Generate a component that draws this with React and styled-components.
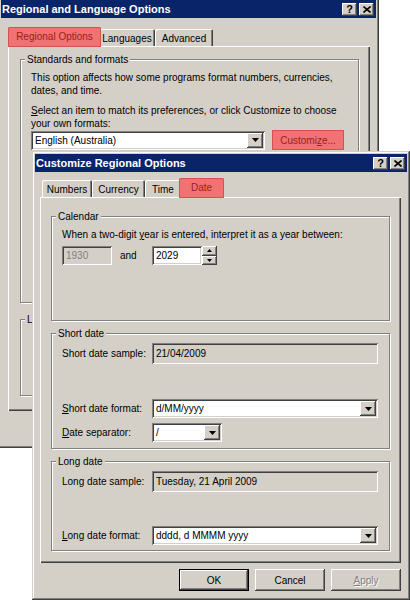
import styled, { createGlobalStyle, css } from "styled-components";

const FACE = "#d4d0c8";

const raised = css`
  box-shadow: inset -1px -1px #404040, inset 1px 1px #fff, inset -2px -2px #808080, inset 2px 2px ${FACE};
`;
const sunken = css`
  box-shadow: inset 1px 1px #808080, inset -1px -1px #fff, inset 2px 2px #404040, inset -2px -2px ${FACE};
`;
// red marker the screenshot author painted over a few controls
const marked = css`
  background: #f07272;
  color: #9e1c1c;
  box-shadow: inset 0 0 0 1px #d65050;
`;

const GlobalStyle = createGlobalStyle`
  html, body { margin: 0; padding: 0; background: #fff; }
  body {
    font-family: "Liberation Sans", Arial, sans-serif;
    font-size: 10px;
    color: #000;
  }
`;

const Desktop = styled.div`
  position: relative;
  width: 410px;
  height: 600px;
  overflow: hidden;
`;

const Window = styled.div`
  position: absolute;
  left: ${(p) => p.$x}px;
  top: ${(p) => p.$y}px;
  width: ${(p) => p.$w}px;
  height: ${(p) => p.$h}px;
  box-sizing: border-box;
  padding: 3px;
  display: flex;
  flex-direction: column;
  background: ${FACE};
  box-shadow: inset -1px -1px #404040, inset 1px 1px ${FACE}, inset -2px -2px #808080, inset 2px 2px #fff;
`;

const TitleBar = styled.div`
  height: 18px;
  flex: none;
  display: flex;
  align-items: center;
  padding: 0 2px 0 1px;
  background: #0a246a;
  color: #fff;
  font-size: 11px;
  font-weight: bold;
`;

const Title = styled.span`
  flex: 1;
  white-space: nowrap;
`;

const CaptionButton = styled.div`
  width: 15px;
  height: 13px;
  margin-left: 2px;
  box-sizing: border-box;
  display: flex;
  align-items: center;
  justify-content: center;
  background: ${FACE};
  color: #000;
  font-size: 11px;
  font-weight: bold;
  ${raised}
`;

const Body = styled.div`
  flex: 1;
  min-height: 0;
  display: flex;
  flex-direction: column;
  padding: ${(p) => p.$pad};
`;

const TabStrip = styled.div`
  height: 19px;
  flex: none;
  display: flex;
  align-items: flex-end;
  padding-left: 2px;
`;

const Tab = styled.div`
  width: ${(p) => p.$w}px;
  height: ${(p) => (p.$active ? 20 : 17)}px;
  box-sizing: border-box;
  padding-top: 2px;
  display: flex;
  align-items: center;
  justify-content: center;
  white-space: nowrap;
  background: ${FACE};
  border-radius: 2px 2px 0 0;
  box-shadow: inset 1px 1px #fff, inset -1px 0 #404040, inset -2px 0 #808080;
  ${(p) =>
    p.$active &&
    css`
      margin: 0 -2px -1px;
      position: relative;
      z-index: 1;
      padding: 0 0 1px;
    `}
  ${(p) => p.$marked && marked}
`;

const Panel = styled.div`
  flex: 1;
  min-height: 0;
  padding: ${(p) => p.$pad};
  box-shadow: inset 1px 1px #fff, inset -1px -1px #404040, inset -2px -2px #808080;
`;

const Group = styled.div`
  height: ${(p) => p.$h}px;
  margin-top: ${(p) => p.$mt || 0}px;
  box-sizing: border-box;
  padding: 0 10px;
  border: 1px solid #808080;
  box-shadow: inset 1px 1px #fff, 1px 1px #fff;
`;

const Legend = styled.div`
  width: fit-content;
  margin: -7px 0 0 -6px;
  padding: 0 2px;
  line-height: 13px;
  background: ${FACE};
`;

const Text = styled.p`
  margin: ${(p) => p.$mt || 0}px 0 0;
  line-height: 13px;
  white-space: nowrap;
`;

const Row = styled.div`
  height: ${(p) => p.$h || 20}px;
  margin-top: ${(p) => p.$mt || 0}px;
  display: flex;
  align-items: center;
  gap: ${(p) => p.$gap || 0}px;
`;

const Label = styled.span`
  width: 90px;
  flex: none;
  white-space: nowrap;
`;

const Conj = styled.span`
  width: 32px;
  padding-left: 8px;
`;

const Field = styled.div`
  width: ${(p) => p.$w}px;
  height: ${(p) => p.$h || 20}px;
  flex: none;
  box-sizing: border-box;
  padding: 2px;
  display: flex;
  align-items: center;
  background: ${(p) => (p.$readonly ? FACE : "#fff")};
  color: ${(p) => (p.$dim ? "#808080" : "#000")};
  ${sunken}
`;

const FieldText = styled.span`
  flex: 1;
  padding-left: 2px;
  white-space: nowrap;
  overflow: hidden;
`;

const DropButton = styled.div`
  width: 16px;
  height: 100%;
  box-sizing: border-box;
  display: flex;
  align-items: center;
  justify-content: center;
  background: ${FACE};
  ${raised}
`;

const Spinner = styled.div`
  width: 15px;
  height: 19px;
  display: flex;
  flex-direction: column;
`;

const SpinButton = styled.div`
  flex: 1;
  display: flex;
  align-items: center;
  justify-content: center;
  background: ${FACE};
  ${raised}
`;

const ButtonRow = styled.div`
  flex: none;
  display: flex;
  justify-content: flex-end;
  gap: 6px;
  margin-top: 6px;
`;

const Button = styled.div`
  width: ${(p) => p.$w || 70}px;
  height: ${(p) => p.$h || 22}px;
  flex: none;
  box-sizing: border-box;
  display: flex;
  align-items: center;
  justify-content: center;
  background: ${FACE};
  ${raised}
  ${(p) =>
    p.$default &&
    css`
      box-shadow: inset 0 0 0 1px #000, inset -2px -2px #404040, inset 2px 2px #fff, inset -3px -3px #808080;
    `}
  ${(p) =>
    p.$disabled &&
    css`
      color: #808080;
      text-shadow: 1px 1px #fff;
    `}
  ${(p) => p.$marked && marked}
`;

const CloseGlyph = () => (
  <svg width="8" height="7" viewBox="0 0 8 7">
    <path d="M0.5 0.5L7.5 6.5M7.5 0.5L0.5 6.5" stroke="#000" strokeWidth="1.6" />
  </svg>
);

const DownArrow = () => (
  <svg width="7" height="4" viewBox="0 0 7 4">
    <path d="M0 0h7L3.5 4z" fill="#000" />
  </svg>
);

const SmallArrow = ({ up }) => (
  <svg width="5" height="3" viewBox="0 0 5 3">
    <path d={up ? "M0 3h5L2.5 0z" : "M0 0h5L2.5 3z"} fill="#000" />
  </svg>
);

const Caption = ({ children }) => (
  <TitleBar>
    <Title>{children}</Title>
    <CaptionButton>?</CaptionButton>
    <CaptionButton>
      <CloseGlyph />
    </CaptionButton>
  </TitleBar>
);

const Combo = ({ w, h, value }) => (
  <Field $w={w} $h={h}>
    <FieldText>{value}</FieldText>
    <DropButton>
      <DownArrow />
    </DropButton>
  </Field>
);

const RegionalWindow = () => (
  <Window $x={-2} $y={-3} $w={381} $h={451}>
    <Caption>Regional and Language Options</Caption>
    <Body $pad="9px 6px 6px 7px">
      <TabStrip>
        <Tab $w={93} $active $marked>Regional Options</Tab>
        <Tab $w={56}>Languages</Tab>
        <Tab $w={58}>Advanced</Tab>
      </TabStrip>
      <Panel $pad="13px 11px 0 12px">
        <Group $h={244}>
          <Legend>Standards and formats</Legend>
          <Text $mt={5}>
            This option affects how some programs format numbers, currencies,
            <br />
            dates, and time.
          </Text>
          <Text $mt={7}>
            <u>S</u>elect an item to match its preferences, or click Customize to choose
            <br />
            your own formats:
          </Text>
          <Row $gap={7}>
            <Combo w={234} h={19} value="English (Australia)" />
            <Button $w={72} $h={20} $marked>
              Customi<u>z</u>e...
            </Button>
          </Row>
        </Group>
        <Group $h={77} $mt={16}>
          <Legend>Location</Legend>
        </Group>
      </Panel>
      <ButtonRow>
        <Button $default>OK</Button>
        <Button>Cancel</Button>
        <Button $disabled>
          <u>A</u>pply
        </Button>
      </ButtonRow>
    </Body>
  </Window>
);

const CustomizeWindow = () => (
  <Window $x={32} $y={151} $w={378} $h={449}>
    <Caption>Customize Regional Options</Caption>
    <Body $pad="6px 6px 6px 5px">
      <TabStrip>
        <Tab $w={50}>Numbers</Tab>
        <Tab $w={53}>Currency</Tab>
        <Tab $w={36}>Time</Tab>
        <Tab $w={45} $active $marked>Date</Tab>
      </TabStrip>
      <Panel $pad="19px 11px 0 11px">
        <Group $h={105}>
          <Legend>Calendar</Legend>
          <Text $mt={5}>
            When a two-digit <u>y</u>ear is entered, interpret it as a year between:
          </Text>
          <Row $mt={5} $h={19}>
            <Field $w={50} $h={19} $readonly $dim>
              <FieldText>1930</FieldText>
            </Field>
            <Conj>and</Conj>
            <Field $w={50} $h={19}>
              <FieldText>2029</FieldText>
            </Field>
            <Spinner>
              <SpinButton>
                <SmallArrow up />
              </SpinButton>
              <SpinButton>
                <SmallArrow />
              </SpinButton>
            </Spinner>
          </Row>
        </Group>

        <Group $h={116} $mt={12}>
          <Legend>Short date</Legend>
          <Row $mt={3} $h={21}>
            <Label>Short date sample:</Label>
            <Field $w={226} $h={21} $readonly>
              <FieldText>21/04/2009</FieldText>
            </Field>
          </Row>
          <Row $mt={35} $h={19}>
            <Label>
              <u>S</u>hort date format:
            </Label>
            <Combo w={226} h={19} value="d/MM/yyyy" />
          </Row>
          <Row $mt={5} $h={19}>
            <Label>
              <u>D</u>ate separator:
            </Label>
            <Combo w={70} h={19} value="/" />
          </Row>
        </Group>

        <Group $h={90} $mt={12}>
          <Legend>Long date</Legend>
          <Row $mt={3} $h={21}>
            <Label>Long date sample:</Label>
            <Field $w={226} $h={21} $readonly>
              <FieldText>Tuesday, 21 April 2009</FieldText>
            </Field>
          </Row>
          <Row $mt={34} $h={19}>
            <Label>
              <u>L</u>ong date format:
            </Label>
            <Combo w={226} h={19} value="dddd, d MMMM yyyy" />
          </Row>
        </Group>
      </Panel>
      <ButtonRow>
        <Button $default>OK</Button>
        <Button>Cancel</Button>
        <Button $disabled>
          <u>A</u>pply
        </Button>
      </ButtonRow>
    </Body>
  </Window>
);

export default function App() {
  return (
    <>
      <GlobalStyle />
      <Desktop>
        <RegionalWindow />
        <CustomizeWindow />
      </Desktop>
    </>
  );
}
